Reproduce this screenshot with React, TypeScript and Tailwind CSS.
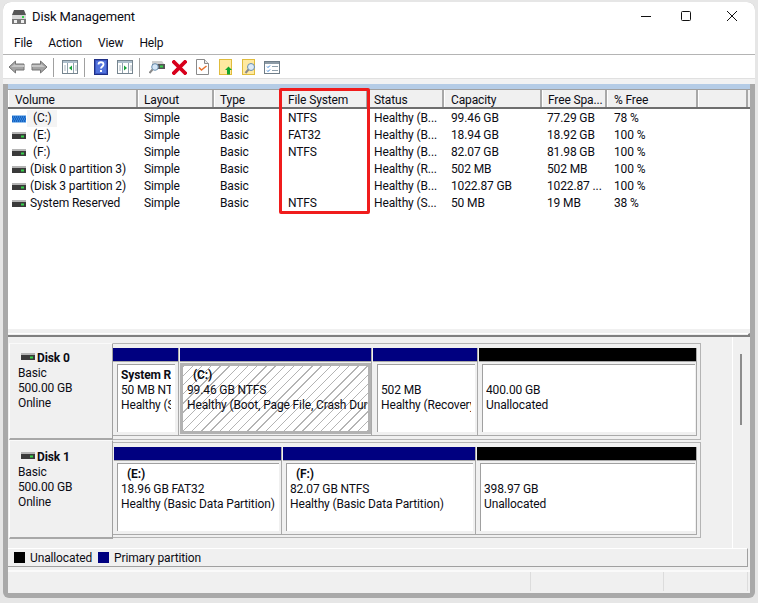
import React from "react";

const F = { fontFamily: 'Roboto, "Noto Sans", sans-serif' };

const cols = [
  { label: "Volume", w: "w-[130px]", pl: "pl-[6px]" },
  { label: "Layout", w: "w-[76px]", pl: "pl-[5px]" },
  { label: "Type", w: "w-[67px]", pl: "pl-[5px]" },
  { label: "File System", w: "w-[87px]", pl: "pl-[6px]" },
  { label: "Status", w: "w-[76px]", pl: "pl-[5px]" },
  { label: "Capacity", w: "w-[98px]", pl: "pl-[6px]" },
  { label: "Free Spa...", w: "w-[65px]", pl: "pl-[5px]" },
  { label: "% Free", w: "w-[91px]", pl: "pl-[6px]" },
  { label: "", w: "w-[50px]", pl: "pl-[5px]" },
];

const rows = [
  ["(C:)", "Simple", "Basic", "NTFS", "Healthy (B...", "99.46 GB", "77.29 GB", "78 %"],
  ["(E:)", "Simple", "Basic", "FAT32", "Healthy (B...", "18.94 GB", "18.92 GB", "100 %"],
  ["(F:)", "Simple", "Basic", "NTFS", "Healthy (B...", "82.07 GB", "81.98 GB", "100 %"],
  ["(Disk 0 partition 3)", "Simple", "Basic", "", "Healthy (R...", "502 MB", "502 MB", "100 %"],
  ["(Disk 3 partition 2)", "Simple", "Basic", "", "Healthy (B...", "1022.87 GB", "1022.87 ...", "100 %"],
  ["System Reserved", "Simple", "Basic", "NTFS", "Healthy (S...", "50 MB", "19 MB", "38 %"],
];

function DriveIcon({ striped }: { striped?: boolean }) {
  if (striped) {
    return (
      <svg width="14" height="8" viewBox="0 0 14 8" className="shrink-0">
        <rect width="14" height="7" y="0.5" fill="#2f86e0" />
        <path d="M0 2h14M1 4h13M0 6h14" stroke="#0c3f99" strokeDasharray="1 1" />
      </svg>
    );
  }
  return (
    <svg width="14" height="7" viewBox="0 0 14 7" className="shrink-0">
      <rect width="14" height="2" fill="#b4b4b4" />
      <rect width="14" height="5" y="2" fill="#3a3a3a" />
      <rect x="9" y="3.500" width="3" height="2" fill="#35d24a" />
    </svg>
  );
}

function Arrow({ flip }: { flip?: boolean }) {
  return (
    <svg width="17" height="14" viewBox="0 0 17 14" className={flip ? "-scale-x-100" : ""}>
      <path d="M7.500 1 1 7l6.500 6V10h8.500V4H7.500z" fill="#a4a4a4" stroke="#757575" />
      <path d="M7 4 3 7h13V5H7z" fill="#c6c6c6" />
    </svg>
  );
}

function PaneIcon({ right }: { right?: boolean }) {
  return (
    <svg width="16" height="14" viewBox="0 0 16 14">
      <rect x="0.500" y="0.500" width="15" height="13" fill="#fff" stroke="#76858f" />
      <rect x="1" y="1" width="14" height="2" fill="#aebfcc" />
      <path d="M5.500 3v10M11.500 3v10" stroke="#8fa0ac" />
      <path d="M2 6h2M2 8h2M2 10h2M13 6h2M13 8h2M13 10h2" stroke="#a9b6c0" />
      <path d={right ? "M7 5.500l3 2.500-3 2.500z" : "M10 5.500L7 8l3 2.500z"} fill="#17a33a" />
    </svg>
  );
}

function Sep({ ml }: { ml: string }) {
  return <div className={`w-px h-[19px] bg-[#a0a0a0] ${ml}`} />;
}

function Toolbar() {
  return (
    <div className="h-[23px] flex items-center pl-[5px] pt-px bg-white shrink-0">
      <Arrow />
      <div className="ml-[6px]"><Arrow flip /></div>
      <Sep ml="ml-[5px]" />
      <div className="ml-[8px]"><PaneIcon /></div>
      <Sep ml="ml-[6px]" />
      <div className="ml-[9px]">
        <svg width="14" height="16" viewBox="0 0 14 16">
          <rect x="0.500" y="0.500" width="13" height="15" fill="#3a55c0" stroke="#1f2f85" />
          <rect x="2" y="2" width="10" height="12" fill="#5273dc" />
          <path d="M4.500 5.500c0-3 5-3 5 0 0 2-2.500 2-2.500 4" fill="none" stroke="#fff" strokeWidth="1.800" />
          <rect x="6" y="11" width="2" height="2" fill="#fff" />
        </svg>
      </div>
      <div className="ml-[9px]"><PaneIcon right /></div>
      <Sep ml="ml-[6px]" />
      <div className="ml-[9px]">
        <svg width="16" height="14" viewBox="0 0 16 14">
          <path d="M3 1h10l2 3H3z" fill="#cfcfcf" />
          <rect x="3" y="4" width="13" height="5" fill="#555" />
          <rect x="11" y="5.500" width="3" height="2" fill="#35d24a" />
          <circle cx="6" cy="7" r="3.300" fill="#d5e6f6" stroke="#6a8fb0" />
          <path d="M3.500 9.500 0.500 13" stroke="#8a8a8a" strokeWidth="2" />
        </svg>
      </div>
      <div className="ml-[7px]">
        <svg width="15" height="15" viewBox="0 0 15 15">
          <path d="M2 2l11 11M13 2 2 13" stroke="#d8001c" strokeWidth="3.800" strokeLinecap="square" />
        </svg>
      </div>
      <div className="ml-[9px]">
        <svg width="13" height="16" viewBox="0 0 13 16">
          <path d="M.5.5h8l4 4v11H.5z" fill="#fff" stroke="#8a8a8a" />
          <path d="M8.500.5v4h4" fill="#e8e8e8" stroke="#8a8a8a" />
          <path d="M3 8.500l2.500 2.500 5-4" fill="none" stroke="#e8702a" strokeWidth="1.500" />
        </svg>
      </div>
      <div className="ml-[10px]">
        <svg width="14" height="16" viewBox="0 0 14 16">
          <rect x="0.500" y="0.500" width="12" height="15" fill="#ffe9a0" stroke="#e0bc3c" />
          <path d="M9.500 7.500l3.500 3.500h-2v4.500H8V11H6z" fill="#12a52e" />
        </svg>
      </div>
      <div className="ml-[9px]">
        <svg width="14" height="16" viewBox="0 0 14 16">
          <rect x="0.500" y="0.500" width="12" height="15" fill="#ffe9a0" stroke="#e0bc3c" />
          <circle cx="9" cy="8" r="3.500" fill="#dcebf8" stroke="#6a8fb0" />
          <path d="M6.500 10.500 3.500 14" stroke="#8a8a8a" strokeWidth="2" />
        </svg>
      </div>
      <div className="ml-[8px]">
        <svg width="16" height="13" viewBox="0 0 16 13">
          <rect x="0.500" y="0.500" width="15" height="12" fill="#fff" stroke="#6f7d88" />
          <rect x="1" y="1" width="14" height="2" fill="#8d9ba6" />
          <path d="M3 5.500l1 1 2-2M3 9.500l1 1 2-2" fill="none" stroke="#2f7fd6" />
          <path d="M8 5.500h6M8 9.500h6" stroke="#8fa0ac" />
        </svg>
      </div>
    </div>
  );
}

function Header() {
  return (
    <div className="flex h-[20px] bg-[#f0f0f0] border-t border-t-[#a0a0a0] border-b-2 border-b-[#6e6e6e] -ml-px">
      {cols.map((c, i) => (
        <div
          key={i}
          className={`${c.w} ${c.pl} shrink-0 leading-[20px] whitespace-nowrap overflow-hidden border-l border-l-white border-r-2 border-r-[#a8a8a8]`}
        >
          {c.label}
        </div>
      ))}
    </div>
  );
}

function ListRow({ r, idx }: { r: string[]; idx: number }) {
  const indent = idx < 3;
  return (
    <div className="flex h-[17px] leading-[17px] whitespace-nowrap">
      <div className="w-[130px] shrink-0 flex items-center pl-[3px]">
        <DriveIcon striped={idx === 0} />
        {idx === 0 ? (
          <span className="ml-[1px] w-[30px] bg-[#f4f4f4] pl-[6px]">{r[0]}</span>
        ) : (
          <span className={indent ? "ml-[7px]" : "ml-[4px]"}>{r[0]}</span>
        )}
      </div>
      <div className="w-[76px] shrink-0 pl-[5px]">{r[1]}</div>
      <div className="w-[67px] shrink-0 pl-[5px]">{r[2]}</div>
      <div className="w-[87px] shrink-0 pl-[6px]">{r[3]}</div>
      <div className="w-[76px] shrink-0 pl-[5px]">{r[4]}</div>
      <div className="w-[97px] shrink-0 pl-[6px]">{r[5]}</div>
      <div className="w-[66px] shrink-0 pl-[5px]">{r[6]}</div>
      <div className="w-[90px] shrink-0 pl-[6px]">{r[7]}</div>
    </div>
  );
}

function Lines({ name, l1, l2, indent }: { name?: string; l1: string; l2: string; indent?: boolean }) {
  return (
    <div className="h-full overflow-hidden whitespace-nowrap">
      <div className={`font-bold h-[15px] leading-[15px] ${indent ? "pl-[6px]" : ""}`}>{name}</div>
      <div className="h-[15px] leading-[15px]">{l1}</div>
      <div className="h-[15px] leading-[15px]">{l2}</div>
    </div>
  );
}

function Partition({
  w, bar, name, l1, l2, selected, pad = "pl-[4px] pr-[1px]", last,
}: {
  w: string; bar: string; name?: string; l1: string; l2: string; selected?: boolean; pad?: string; last?: boolean;
}) {
  return (
    <div className={`${w} shrink-0 flex flex-col border-r border-[#a9a9a9] ${last ? "" : "mr-px"}`}>
      <div className={`h-[13px] shrink-0 ${bar}`} />
      <div className="flex-1 border-t border-[#a9a9a9] min-h-0">
        {selected ? (
          <div className="h-full pt-[1px] pb-[1px]">
            <div className="h-full border-[3px] border-[#b2b2b2] bg-white pl-[4px] pr-[1px] pt-[2px] [background-image:repeating-linear-gradient(135deg,#b4b4b4_0,#b4b4b4_1px,transparent_1px,transparent_6.5px)]">
              <Lines name={name} l1={l1} l2={l2} indent />
            </div>
          </div>
        ) : (
          <div className={`h-full ${pad} pt-[2px] pb-[3px]`}>
            <div className="h-full bg-white border-t border-l border-[#a0a0a0] pl-[3px] pr-[4px] pt-[3px]">
              <Lines name={name} l1={l1} l2={l2} indent={!!name && name.startsWith("(")} />
            </div>
          </div>
        )}
      </div>
    </div>
  );
}

function DiskRow({
  name, h, pt, boxTop, boxH, startPad, children,
}: {
  name: string; h: string; pt: string; boxTop: string; boxH: string; startPad?: string; children: React.ReactNode;
}) {
  return (
    <div className={`${h} flex shrink-0`}>
      <div className={`w-[104px] shrink-0 border-t border-l border-t-[#fafafa] border-l-white border-r border-b-2 border-r-[#a0a0a0] border-b-[#a8a8a8] pl-[8px] ${pt} leading-[15px]`}>
        <div className="flex items-center h-[15px] pl-[3px]">
          <span className="mr-[2px] -mt-[4px] flex"><DriveIcon /></span>
          <span className="font-bold">{name}</span>
        </div>
        <div>Basic</div>
        <div>500.00 GB</div>
        <div>Online</div>
      </div>
      <div className={`${boxTop} ${boxH} w-[588px] shrink-0 border-t border-r border-b border-[#b4b4b4] pt-[4px]`}>
        <div className={`flex h-[88px] w-[584px] border-b border-r border-[#a9a9a9] ${startPad ?? ""}`}>{children}</div>
      </div>
    </div>
  );
}

export default function App() {
  return (
    <div className="w-[758px] h-[603px] bg-[#e6e6e6] overflow-hidden text-[12px] tracking-[-0.13px] text-[#0c0c14] pl-[3px] pt-[2px]" style={F}>
      <div className="w-[752px] h-[596px] rounded-t-[8px] rounded-b-[6px] bg-[#a9a9a9] overflow-hidden flex flex-col">
        <div className="h-[28px] bg-white flex items-center shrink-0 pt-px">
          <svg width="16" height="16" viewBox="0 0 16 16" className="ml-[8px]">
            <path d="M3 1h10l2 5H1z" fill="#555" />
            <rect x="1" y="6" width="14" height="4" fill="#d8d8d8" />
            <rect x="11" y="7" width="2" height="2" fill="#35d24a" />
            <rect x="1" y="10" width="14" height="5" fill="#777" />
            <rect x="3" y="11" width="3" height="3" fill="#eee" />
            <rect x="10" y="11" width="3" height="3" fill="#eee" />
          </svg>
          <span className="ml-[5px] text-[13px] mt-px">Disk Management</span>
          <div className="ml-auto flex items-center -mt-[2px] pr-[17px]">
            <svg width="12" height="12" viewBox="0 0 12 12"><path d="M1 6.500h10" stroke="#111" /></svg>
            <svg width="12" height="12" viewBox="0 0 12 12" className="ml-[28px]"><rect x="1.500" y="1.500" width="9" height="9" rx="1" fill="none" stroke="#111" /></svg>
            <svg width="12" height="12" viewBox="0 0 12 12" className="ml-[34px]"><path d="M1 1l10 10M11 1 1 11" stroke="#111" /></svg>
          </div>
        </div>
        <div className="h-[25px] bg-white flex items-center pl-[11px] pt-[2px] gap-[16px] shrink-0 border-b border-[#b4b4b4]">
          <span>File</span><span>Action</span><span>View</span><span>Help</span>
        </div>
        <Toolbar />
        <div className="h-[6px] bg-[#f2f2f2] border-t border-[#e0e0e0] shrink-0" />
        <div className="mx-[5px] mb-[5px] flex-1 flex flex-col min-h-0 bg-[#f0f0f0]">
          <div className="h-[5px] bg-[#b5cce6] shrink-0" />
          <div className="relative h-[240px] bg-white shrink-0 pl-px">
            <Header />
            <div className="pt-px">
              {rows.map((r, i) => <ListRow key={i} r={r} idx={i} />)}
            </div>
            <div className="absolute left-[271px] top-[-1px] w-[91px] h-[126px] border-[3px] border-[#f01c1c] rounded-[2px]" />
          </div>
          <div className="h-[8px] shrink-0 pt-[4px] bg-[#f0f0f0]">
            <div className="h-[4px] border-b-2 border-r-2 border-[#808080] border-t border-t-white" />
          </div>
          <div className="flex shrink-0 h-[211px]">
            <div className="w-[724px] shrink-0 pl-px pt-[6px] flex flex-col">
              <DiskRow name="Disk 0" h="h-[97px]" pt="pt-[7px]" boxTop="mt-0" boxH="h-[97px]">
                <Partition w="w-[66px]" bar="bg-[#000080]" name="System Reserved" l1="50 MB NTFS" l2="Healthy (System, Active, Primary Partition)" pad="pl-[4px] pr-[3px]" />
                <Partition w="w-[192px]" bar="bg-[#000080]" name="(C:)" l1="99.46 GB NTFS" l2="Healthy (Boot, Page File, Crash Dump, Primary Partition)" selected />
                <Partition w="w-[105px]" bar="bg-[#000080]" l1="502 MB" l2="Healthy (Recovery Partition)" pad="pl-[4px] pr-[2px]" />
                <Partition w="w-[218px]" bar="bg-black" l1="400.00 GB" l2="Unallocated" pad="pl-[3px] pr-[1px]" last />
              </DiskRow>
              <DiskRow name="Disk 1" h="h-[99px]" pt="pt-[9px]" boxTop="mt-[2px]" boxH="h-[96px]" startPad="pl-px">
                <Partition w="w-[168px]" bar="bg-[#000080]" name="(E:)" l1="18.96 GB FAT32" l2="Healthy (Basic Data Partition)" pad="pl-[3px] pr-[2px]" />
                <Partition w="w-[193px]" bar="bg-[#000080]" name="(F:)" l1="82.07 GB NTFS" l2="Healthy (Basic Data Partition)" pad="pl-[3px] pr-[2px]" />
                <Partition w="w-[220px]" bar="bg-black" l1="398.97 GB" l2="Unallocated" pad="pl-[3px] pr-[1px]" last />
              </DiskRow>
            </div>
            <div className="flex-1 border-l border-white pl-[7px] pt-[17px]">
              <div className="w-[2px] h-[71px] bg-[#8c8c8c]" />
            </div>
          </div>
          <div className="h-[19px] w-[740px] shrink-0 border-t border-white border-b border-r border-b-[#a0a0a0] border-r-[#a0a0a0] flex items-center pl-[6px] bg-[#f0f0f0]">
            <span className="w-[11px] h-[11px] bg-black mr-[5px]" />
            <span>Unallocated</span>
            <span className="w-[11px] h-[11px] bg-[#000080] ml-[6px] mr-[5px]" />
            <span>Primary partition</span>
          </div>
          <div className="flex-1 flex items-stretch border-t-2 border-[#fafafa] mt-[3px] pb-[2px]">
            <div className="w-[522px]" />
            <div className="w-[133px] border-l border-[#dcdcdc]" />
            <div className="w-[85px] border-l border-r border-[#dcdcdc]" />
          </div>
        </div>
      </div>
    </div>
  );
}
